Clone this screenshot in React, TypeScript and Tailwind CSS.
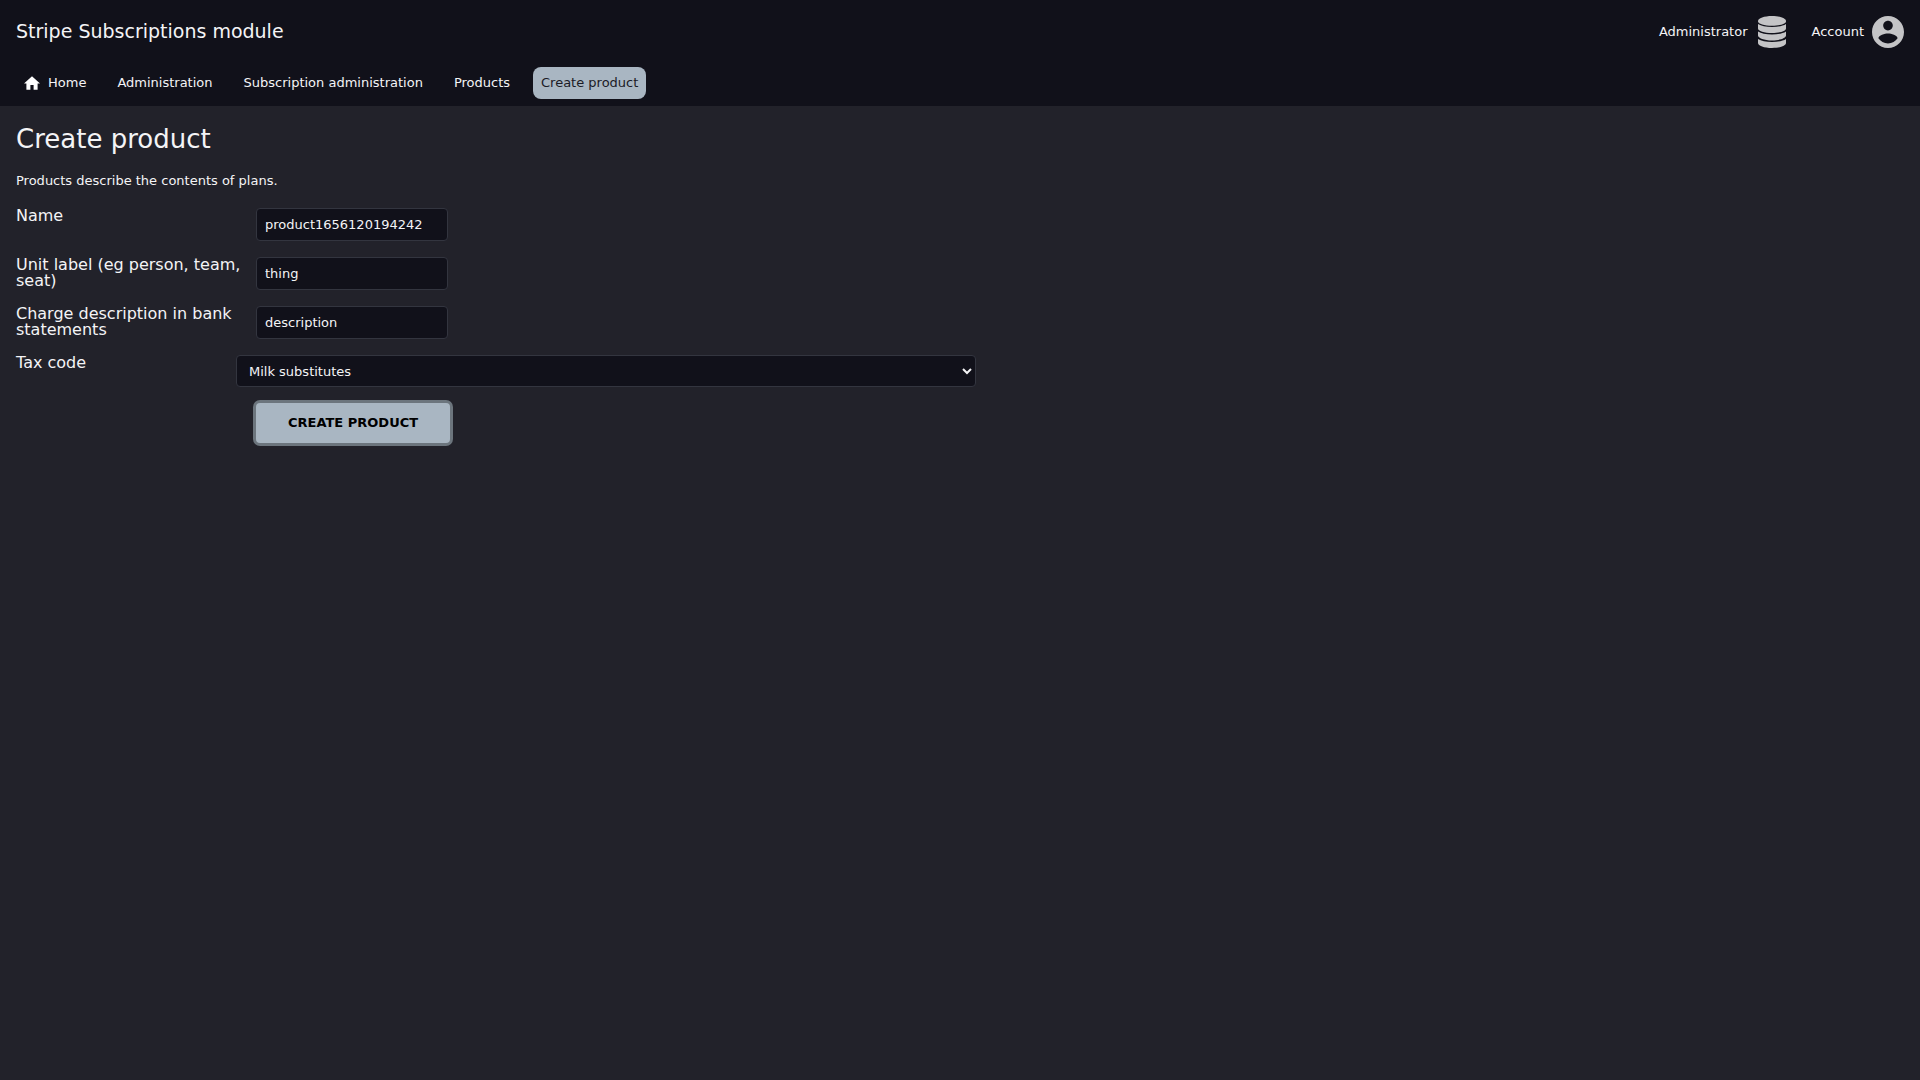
import React from "react";

type Field = { id: string; label: string; value: string };

const crumbs = ["Administration", "Subscription administration", "Products"];

const fields: Field[] = [
  { id: "name", label: "Name", value: "product1656120194242" },
  { id: "unit_label", label: "Unit label (eg person, team, seat)", value: "thing" },
  { id: "statement_descriptor", label: "Charge description in bank statements", value: "description" },
];

function HomeIcon() {
  return (
    <svg viewBox="2 3 20 17" className="h-3.5 w-4 fill-white" aria-hidden="true">
      <path d="M10 20v-6h4v6h5v-8h3L12 3 2 12h3v8z" />
    </svg>
  );
}

function DatabaseIcon() {
  return (
    <svg viewBox="0 0 28 32" className="h-8 w-7 fill-[#c4c4c6]" aria-hidden="true">
      <path d="M14 0C21.700 0 28 2.200 28 5V5.500C28 7.800 21.700 9.800 14 9.800S0 7.800 0 5.500V5C0 2.200 6.300 0 14 0z" />
      <path d="M0 8C3 10 8 11 14 11S25 10 28 8V12.500C28 15 21.700 17 14 17S0 15 0 12.500z" />
      <path d="M0 15.500C3 17.500 8 18.500 14 18.500S25 17.500 28 15.500V19.500C28 22 21.700 24.500 14 24.500S0 22 0 19.500z" />
      <path d="M0 23C3 25 8 26 14 26S25 25 28 23V27C28 29.800 21.700 32 14 32S0 29.800 0 27z" />
    </svg>
  );
}

function AccountIcon() {
  return (
    <svg viewBox="2 2 20 20" className="size-8 fill-[#c4c4c6]" aria-hidden="true">
      <path d="M12 2C6.480 2 2 6.480 2 12s4.480 10 10 10 10-4.480 10-10S17.520 2 12 2zm0 3c1.660 0 3 1.340 3 3s-1.340 3-3 3-3-1.340-3-3 1.340-3 3-3zm0 14.200c-2.500 0-4.710-1.280-6-3.220.030-1.990 4-3.080 6-3.080 1.990 0 5.970 1.090 6 3.080-1.290 1.940-3.500 3.220-6 3.220z" />
    </svg>
  );
}

export default function App() {
  return (
    <div className="min-h-screen bg-[#22222a] font-['DejaVu_Sans',sans-serif] text-[13px] leading-4 text-[#f4f4f6]">
      <header className="bg-[#11111a] pb-[7px]">
        <div className="flex h-16 items-center justify-between px-4">
          <h1 className="pb-0.5 text-[19px] leading-6">Stripe Subscriptions module</h1>
          <div className="flex items-center gap-[26px]">
            <a href="#administrator" className="flex items-center gap-2.5">
              Administrator
              <DatabaseIcon />
            </a>
            <a href="#account" className="flex items-center gap-2">
              Account
              <AccountIcon />
            </a>
          </div>
        </div>
        <nav aria-label="Breadcrumb" className="mt-[3px] flex h-8 items-stretch gap-[15px] px-4">
          <a href="#home" className="flex items-center gap-2 px-2">
            <HomeIcon />
            Home
          </a>
          {crumbs.map((c) => (
            <a key={c} href="#crumb" className="flex items-center px-2">
              {c}
            </a>
          ))}
          <a href="#create" aria-current="page" className="flex items-center rounded-lg bg-[#a9b6c2] px-2 text-[#1b1b26]">
            Create product
          </a>
        </nav>
      </header>

      <main className="px-4 pt-[17px]">
        <h2 className="text-[26px] leading-8">Create product</h2>
        <p className="mt-[18px] mb-[19px]">Products describe the contents of plans.</p>
        <form onSubmit={(e) => e.preventDefault()} className="flex flex-col items-start gap-4">
          {fields.map((f) => (
            <div key={f.id} className="flex items-start">
              <label htmlFor={f.id} className="w-60 text-base leading-4">
                {f.label}
              </label>
              <input
                id={f.id}
                type="text"
                defaultValue={f.value}
                className="h-[33px] w-48 rounded-sm border border-[#33353f] bg-[#11111a] px-2 outline-none"
              />
            </div>
          ))}
          <div className="flex items-start">
            <label htmlFor="tax_code" className="w-55 text-base leading-4">
              Tax code
            </label>
            <select
              id="tax_code"
              defaultValue="milk"
              className="h-8 w-185 rounded-sm border border-[#33353f] bg-[#11111a] px-2 outline-none"
            >
              <option value="milk">Milk substitutes</option>
            </select>
          </div>
          <button
            type="submit"
            className="ml-60 h-10 rounded-sm bg-[#a9b6c2] px-8 font-bold text-black uppercase ring-3 ring-[#6c757d]"
          >
            Create product
          </button>
        </form>
      </main>
    </div>
  );
}
